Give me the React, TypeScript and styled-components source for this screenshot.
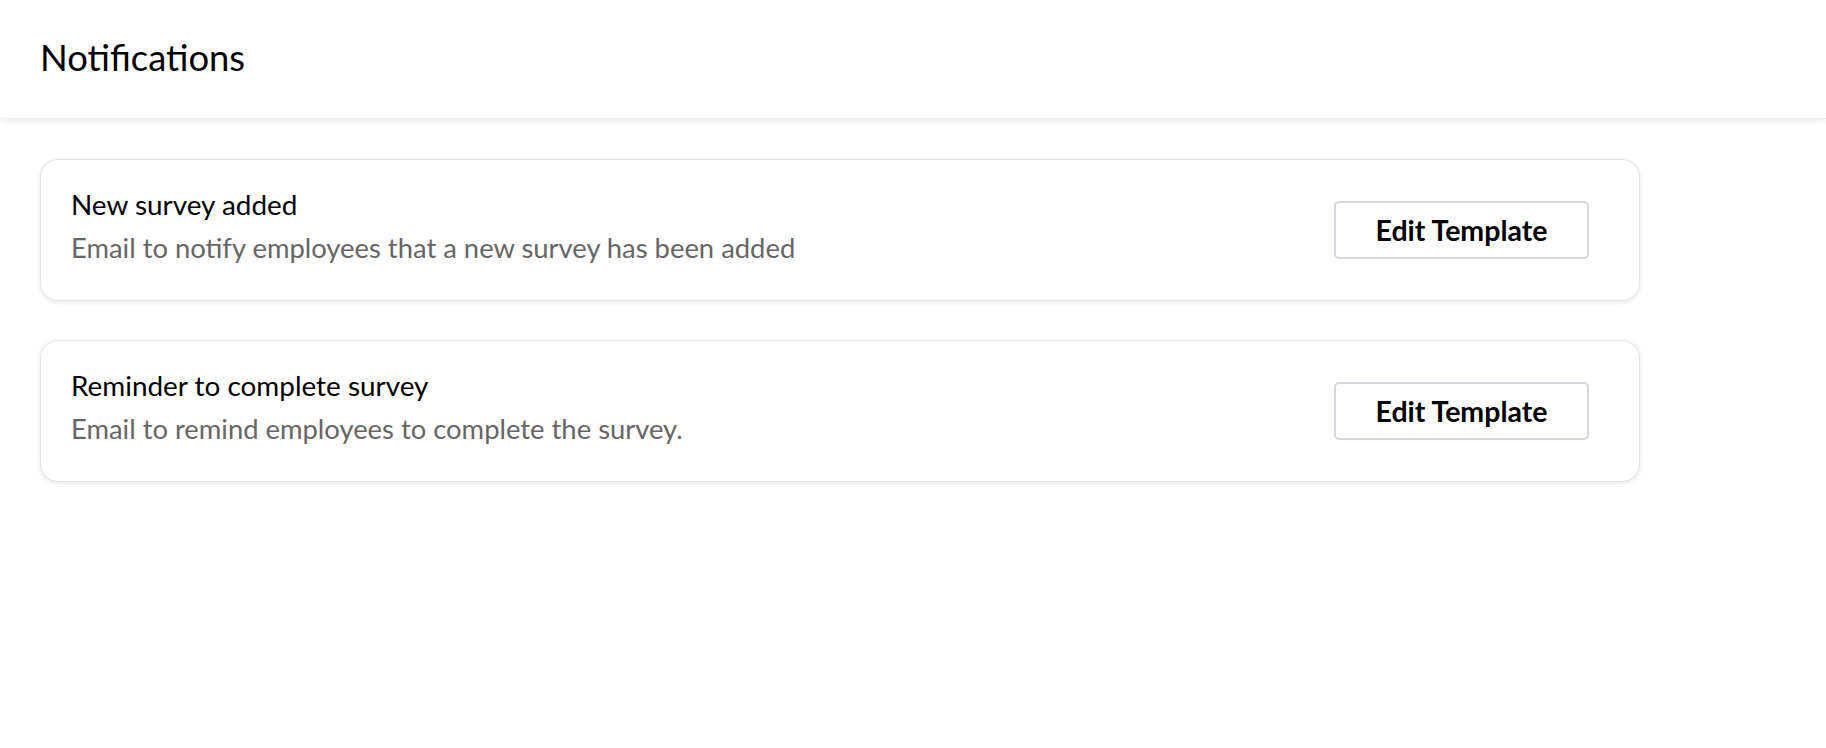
import React from "react";
import styled, { createGlobalStyle } from "styled-components";

const GlobalStyle = createGlobalStyle`
  html, body {
    margin: 0;
    padding: 0;
    background: #ffffff;
    font-family: Lato, "Open Sans", Arial, sans-serif;
    color: #000;
  }
  * {
    box-sizing: border-box;
  }
`;

type Template = {
  id: number;
  title: string;
  description: string;
};

const templates: Template[] = [
  {
    id: 1,
    title: "New survey added",
    description: "Email to notify employees that a new survey has been added",
  },
  {
    id: 2,
    title: "Reminder to complete survey",
    description: "Email to remind employees to complete the survey.",
  },
];

const App = () => {
  return (
    <Page>
      <GlobalStyle />
      <Header>
        <PageTitle>Notifications</PageTitle>
      </Header>
      <List>
        {templates.map((t) => (
          <Card key={t.id}>
            <Info>
              <CardTitle>{t.title}</CardTitle>
              <CardText>{t.description}</CardText>
            </Info>
            <EditButton type="button">Edit Template</EditButton>
          </Card>
        ))}
      </List>
    </Page>
  );
};

const Page = styled.div`
  min-height: 748px;
  background: #fff;
`;

const Header = styled.header`
  height: 119px;
  display: flex;
  align-items: center;
  padding: 0 41px 2px 40px;
  background: #fff;
  box-shadow: 0 2px 6px rgba(0, 0, 0, 0.08);
  border-bottom: 1px solid #ececec;
`;

const PageTitle = styled.h1`
  margin: 0;
  font-size: 36.4px;
  font-weight: 400;
  line-height: 1.2;
  color: #000;
`;

const List = styled.div`
  display: flex;
  flex-direction: column;
  gap: 39px;
  padding: 40px 0 0 40px;
`;

const Card = styled.div`
  width: 1600px;
  height: 142px;
  display: flex;
  align-items: center;
  justify-content: space-between;
  padding: 0 50px 0 30px;
  background: #fff;
  border: 1px solid #e4e4e4;
  border-radius: 18px;
  box-shadow: 0 1px 5px rgba(0, 0, 0, 0.1);
`;

const Info = styled.div`
  display: flex;
  flex-direction: column;
  gap: 8px;
  margin-bottom: 8px;
`;

const CardTitle = styled.div`
  font-size: 27.9px;
  line-height: 36px;
  color: #000;
`;

const CardText = styled.div`
  font-size: 27.4px;
  line-height: 36px;
  color: #666666;
`;

const EditButton = styled.button`
  width: 255px;
  height: 58px;
  background: #fff;
  border: 2px solid #d5d9de;
  border-radius: 5px;
  font-family: Lato, "Open Sans", Arial, sans-serif;
  font-size: 28.5px;
  font-weight: 700;
  color: #000;
  cursor: pointer;
`;

export default App;
